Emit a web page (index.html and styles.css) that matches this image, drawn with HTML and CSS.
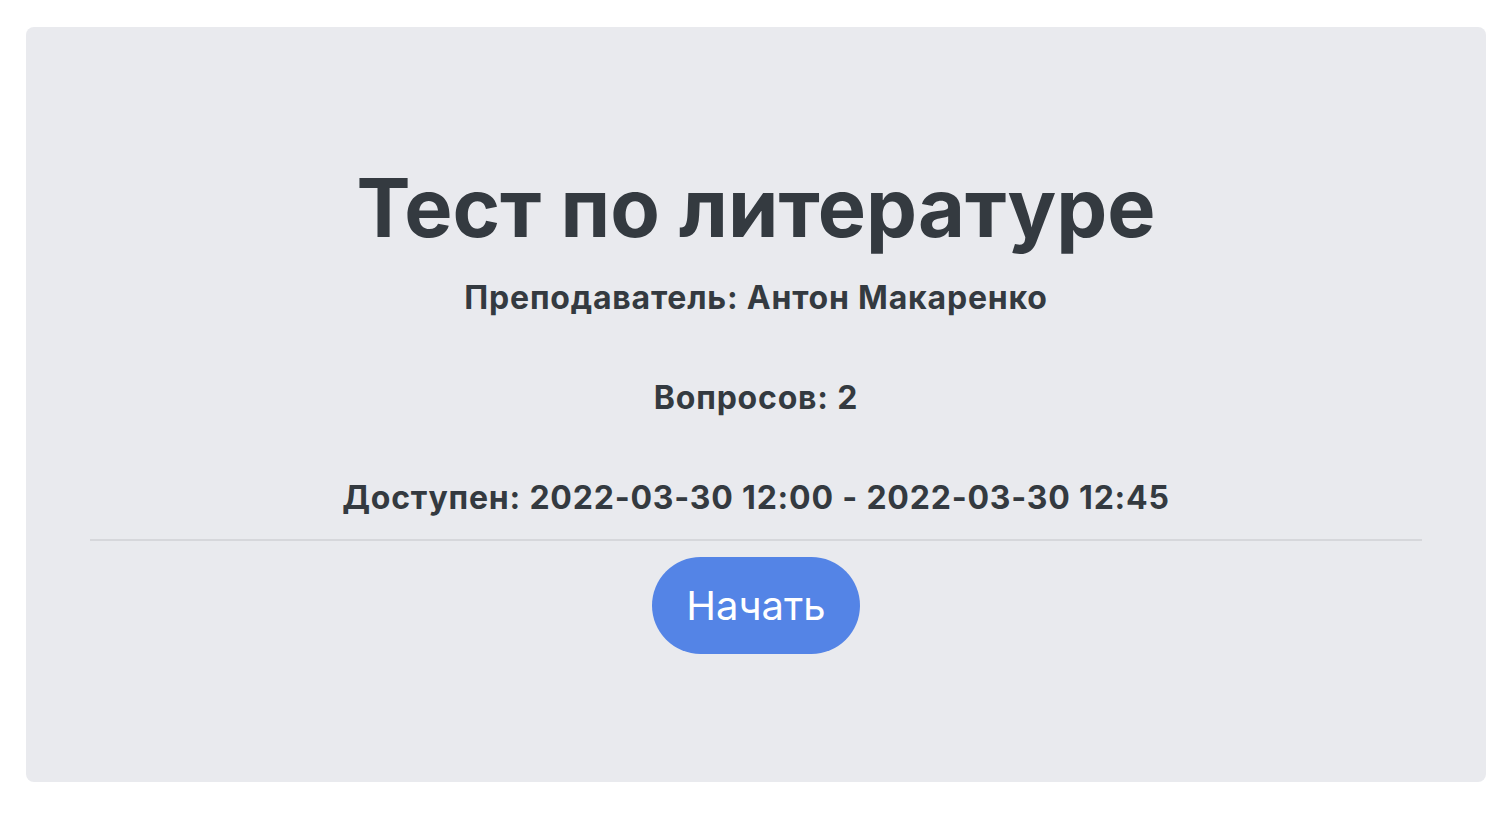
FILE: index.html
```html
<!DOCTYPE html>
<html lang="ru">
<head>
<meta charset="utf-8">
<title>Тест по литературе</title>
<link rel="stylesheet" href="styles.css">
</head>
<body>
<main class="page">
  <section class="card">
    <h1 class="title">Тест по литературе</h1>
    <p class="info info-first">Преподаватель: Антон Макаренко</p>
    <p class="info">Вопросов: 2</p>
    <p class="info">Доступен: 2022-03-30 12:00 - 2022-03-30 12:45</p>
    <hr class="divider">
    <button class="start" type="button">Начать</button>
  </section>
</main>
</body>
</html>
```

FILE: styles.css
```css
html, body {
  margin: 0;
  padding: 0;
  background: #ffffff;
}
body {
  font-family: Inter, "Noto Sans", "Liberation Sans", sans-serif;
  color: #343a40;
}
.page {
  padding: 27px 26px 32px 26px;
}
.card {
  box-sizing: border-box;
  height: 755px;
  background: #e9eaee;
  border-radius: 8px;
  padding: 133px 64px 0 64px;
  display: flex;
  flex-direction: column;
  align-items: center;
}
.title {
  margin: 0;
  font-size: 81px;
  line-height: 96px;
  font-weight: 700;
  letter-spacing: 0;
}
.info {
  margin: 60px 0 0 0;
  font-size: 32px;
  line-height: 40px;
  font-weight: 700;
  letter-spacing: 0.8px;
}
.info-first {
  margin-top: 22px;
}
.divider {
  align-self: stretch;
  margin: 21px 0 0 0;
  border: 0;
  height: 2px;
  background: #d6d7db;
}
.start {
  margin-top: 16px;
  height: 97px;
  padding: 0 34px;
  border: 0;
  border-radius: 49px;
  background: #5484e6;
  color: #ffffff;
  font-family: Inter, "Noto Sans", "Liberation Sans", sans-serif;
  font-size: 40px;
  font-weight: 400;
}
```
